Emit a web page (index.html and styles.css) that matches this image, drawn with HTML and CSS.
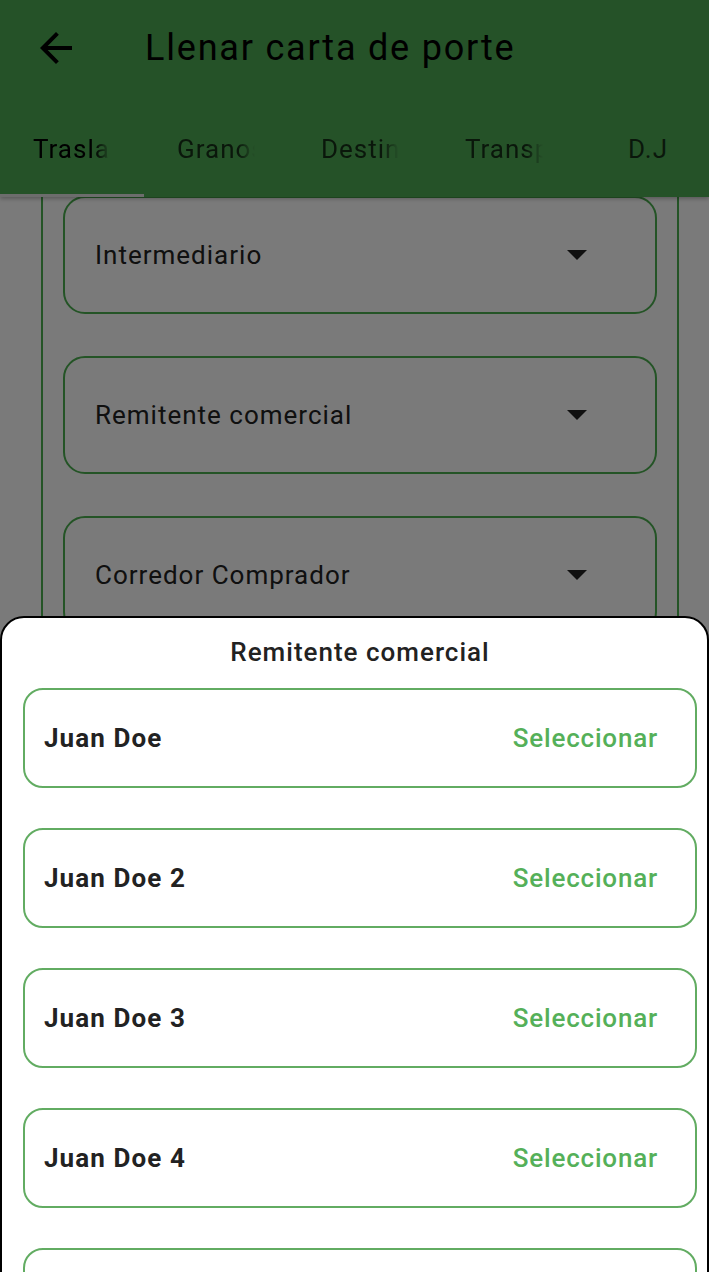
FILE: index.html
```html
<!DOCTYPE html>
<html lang="es">
<head>
<meta charset="utf-8">
<title>Llenar carta de porte</title>
<link rel="stylesheet" href="styles.css">
</head>
<body>
<div class="app">
  <header class="appbar">
    <div class="toolbar">
      <button class="back" aria-label="Volver">
        <svg viewBox="0 0 24 24" width="48" height="48"><path d="M20 11H7.83l5.59-5.59L12 4l-8 8 8 8 1.41-1.41L7.83 13H20v-2z" fill="#000"/></svg>
      </button>
      <h1 class="title">Llenar carta de porte</h1>
    </div>
    <nav class="tabs">
      <div class="tab active"><span class="tab-label">Traslado</span></div>
      <div class="tab"><span class="tab-label">Granos</span></div>
      <div class="tab"><span class="tab-label">Destino</span></div>
      <div class="tab"><span class="tab-label">Transporte</span></div>
      <div class="tab"><span class="tab-label">D.J</span></div>
    </nav>
  </header>

  <main class="content">
    <div class="panel">
      <div class="field"><span>Intermediario</span><svg class="caret" viewBox="0 0 10 5" width="20" height="10"><path d="M0 0l5 5 5-5z"/></svg></div>
      <div class="field"><span>Remitente comercial</span><svg class="caret" viewBox="0 0 10 5" width="20" height="10"><path d="M0 0l5 5 5-5z"/></svg></div>
      <div class="field"><span>Corredor Comprador</span><svg class="caret" viewBox="0 0 10 5" width="20" height="10"><path d="M0 0l5 5 5-5z"/></svg></div>
      <div class="field"><span>Corredor Vendedor</span><svg class="caret" viewBox="0 0 10 5" width="20" height="10"><path d="M0 0l5 5 5-5z"/></svg></div>
    </div>
  </main>

  <div class="scrim"></div>

  <section class="sheet">
    <div class="sheet-inner">
      <h2 class="sheet-title">Remitente comercial</h2>
      <ul class="options">
        <li class="option"><span class="name">Juan Doe</span><span class="select">Seleccionar</span></li>
        <li class="option"><span class="name">Juan Doe 2</span><span class="select">Seleccionar</span></li>
        <li class="option"><span class="name">Juan Doe 3</span><span class="select">Seleccionar</span></li>
        <li class="option"><span class="name">Juan Doe 4</span><span class="select">Seleccionar</span></li>
        <li class="option"><span class="name">Juan Doe 5</span><span class="select">Seleccionar</span></li>
      </ul>
    </div>
  </section>
</div>
</body>
</html>
```

FILE: styles.css
```css
* { box-sizing: border-box; }
html, body { margin: 0; padding: 0; }
body {
  width: 709px;
  height: 1272px;
  overflow: hidden;
  font-family: Roboto, "Noto Sans", "Liberation Sans", sans-serif;
  background: #fff;
}
.app {
  position: relative;
  width: 709px;
  height: 1272px;
  overflow: hidden;
  display: flex;
  flex-direction: column;
}
.appbar {
  position: relative;
  z-index: 2;
  background: #4fab55;
  height: 197px;
  flex: none;
  display: flex;
  flex-direction: column;
  box-shadow: 0 2px 4px rgba(0,0,0,0.25);
}
.toolbar {
  height: 96px;
  display: flex;
  align-items: center;
}
.back {
  margin-left: 32px;
  width: 48px;
  height: 48px;
  padding: 0;
  border: 0;
  background: none;
  display: flex;
}
.title {
  margin: 0 0 0 65px;
  font-size: 36px;
  letter-spacing: 1.8px;
  font-weight: 400;
  color: #000;
  line-height: 40px;
}
.tabs {
  flex: 1;
  display: flex;
  overflow: hidden;
  position: relative;
}
.tab {
  flex: none;
  width: 144px;
  display: flex;
  align-items: center;
  justify-content: center;
  padding: 0 33px;
  position: relative;
}
.tab-label {
  font-size: 26px;
  letter-spacing: 1px;
  padding-top: 4px;
  color: rgba(0,0,0,0.72);
  white-space: nowrap;
  overflow: hidden;
  max-width: 78px;
  -webkit-mask-image: linear-gradient(to right, #000 78%, transparent 100%);
  mask-image: linear-gradient(to right, #000 78%, transparent 100%);
}
.tab:last-child .tab-label { -webkit-mask-image: none; mask-image: none; }
.tab.active .tab-label { color: #000; }
.tab.active::after {
  content: "";
  position: absolute;
  left: 0; right: 0; bottom: 0;
  height: 3px;
  background: #e4e4e4;
}
.content {
  flex: 1;
  position: relative;
  z-index: 1;
  margin-top: -3px;
}
.panel {
  margin-left: 41px;
  width: 638px;
  border-left: 2px solid #4caf50;
  border-right: 2px solid #4caf50;
  padding: 2px 20px 0;
  display: flex;
  flex-direction: column;
  gap: 42px;
}
.field {
  height: 118px;
  border: 2px solid #4caf50;
  border-radius: 22px;
  display: flex;
  align-items: center;
  justify-content: space-between;
  padding: 0 68px 0 30px;
  font-size: 26px;
  letter-spacing: 1px;
  color: #222;
}
.caret path { fill: #222; }
.scrim {
  position: absolute;
  inset: 0;
  z-index: 3;
  background: rgba(0,0,0,0.52);
}
.sheet {
  position: absolute;
  z-index: 4;
  left: 0;
  right: 0;
  top: 616px;
  bottom: -40px;
  background: #fff;
  border: 2px solid #000;
  border-radius: 24px 24px 0 0;
  overflow: hidden;
}
.sheet-inner {
  padding: 19px 10px 0 21px;
}
.sheet-title {
  margin: 0 0 21px;
  text-align: center;
  font-size: 26px;
  letter-spacing: 1px;
  line-height: 30px;
  font-weight: 500;
  color: #222;
}
.options {
  list-style: none;
  margin: 0;
  padding: 0;
  display: flex;
  flex-direction: column;
  gap: 40px;
}
.option {
  height: 100px;
  border: 2px solid #62ac62;
  border-radius: 20px;
  display: flex;
  align-items: center;
  justify-content: space-between;
  padding: 0 37px 0 19px;
  font-size: 26px;
}
.name { font-weight: 700; color: #222; letter-spacing: 1.1px; }
.select { font-weight: 500; color: #55b059; letter-spacing: 0.8px; }
```
